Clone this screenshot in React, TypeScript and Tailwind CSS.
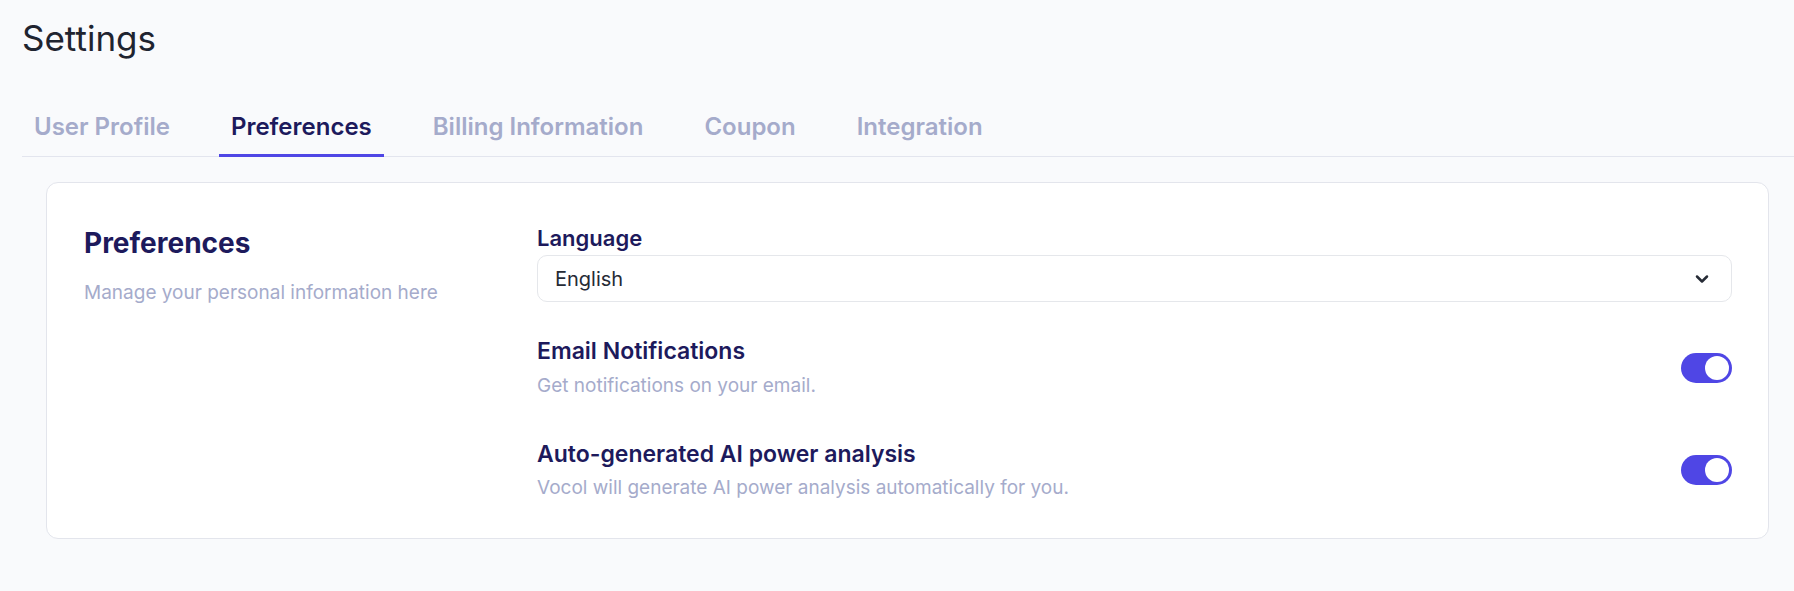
import { ChevronDown } from "lucide-react";
import { useState } from "react";

const tabs = ["User Profile", "Preferences", "Billing Information", "Coupon", "Integration"];

const Toggle = ({ on, onChange }: { on: boolean; onChange: () => void }) => (
  <button
    type="button"
    onClick={onChange}
    className={`flex h-[30px] w-[51px] shrink-0 items-center rounded-full p-[3px] transition-colors ${
      on ? "bg-[#4f46e5] justify-end" : "bg-[#d1d5db] justify-start"
    }`}
  >
    <span className="h-6 w-6 rounded-full bg-white" />
  </button>
);

const App: React.FC = () => {
  const [email, setEmail] = useState(true);
  const [ai, setAi] = useState(true);

  return (
    <div className="min-h-[591px] w-full bg-[#f9fafc] font-['Inter',sans-serif]">
      <div className="pl-[22px] pt-4">
        <h1 className="text-[35px] font-normal leading-[44px] text-[#1f2430]">Settings</h1>

        {/* Tabs */}
        <div className="mt-[51px] flex gap-[37px] border-b border-[#e3e5ee]">
          {tabs.map((t) => (
            <button
              key={t}
              className={`-mb-px border-b-[3px] px-3 pb-[11px] text-[24px] font-semibold leading-[32px] ${
                t === "Preferences"
                  ? "border-[#4f46e5] text-[#1d1a5c]"
                  : "border-transparent text-[#a5abcb]"
              }`}
            >
              {t}
            </button>
          ))}
        </div>
      </div>

      {/* Card */}
      <div className="ml-[46px] mr-[25px] mt-[25px] flex rounded-xl border border-[#e3e5ec] bg-white pb-[37px] pl-[37px] pr-[36px] pt-[40px]">
        <div className="w-[453px] shrink-0 pt-[2px]">
          <h2 className="text-[28px] font-bold leading-[36px] text-[#1d1a5c]">Preferences</h2>
          <p className="mt-[19px] text-[19px] leading-[26px] text-[#a5abcb]">
            Manage your personal information here
          </p>
        </div>

        <div className="flex flex-1 flex-col">
          <label className="text-[22px] font-semibold leading-[30px] text-[#1d1a5c]">Language</label>
          <div className="mt-[2px] flex h-[47px] items-center justify-between rounded-[10px] border border-[#e5e7eb] bg-white pl-[17px] pr-[19px]">
            <span className="text-[20px] text-[#262b36]">English</span>
            <ChevronDown className="h-5 w-5 text-[#262b36]" strokeWidth={3} />
          </div>

          <div className="mt-[34px] flex items-center justify-between">
            <div>
              <div className="text-[23px] font-semibold leading-[30px] text-[#1d1a5c]">Email Notifications</div>
              <div className="mt-[7px] text-[19px] leading-[26px] text-[#a5abcb]">
                Get notifications on your email.
              </div>
            </div>
            <Toggle on={email} onChange={() => setEmail(!email)} />
          </div>

          <div className="mt-[40px] flex items-center justify-between">
            <div>
              <div className="text-[23px] font-semibold leading-[30px] text-[#1d1a5c]">
                Auto-generated AI power analysis
              </div>
              <div className="mt-[6px] text-[19px] leading-[26px] text-[#a5abcb]">
                Vocol will generate AI power analysis automatically for you.
              </div>
            </div>
            <Toggle on={ai} onChange={() => setAi(!ai)} />
          </div>
        </div>
      </div>
    </div>
  );
};

export default App;
